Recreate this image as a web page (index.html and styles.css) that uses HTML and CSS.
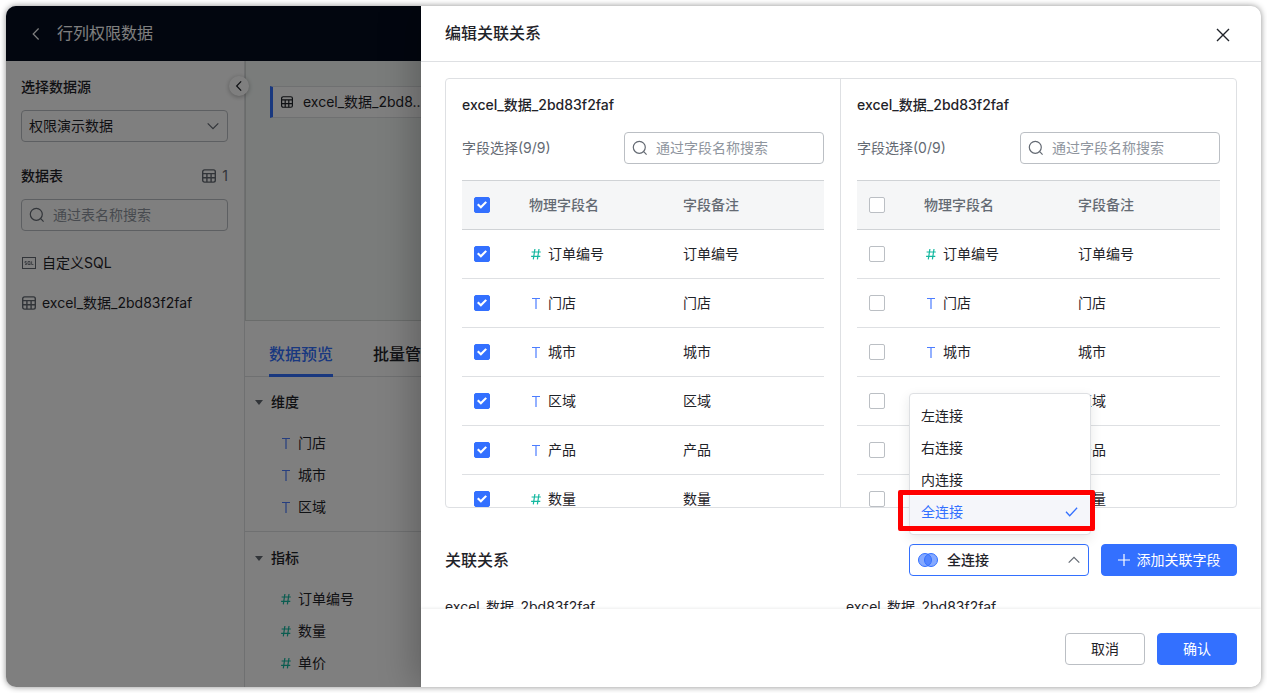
FILE: index.html
```html
<!DOCTYPE html>
<html lang="zh-CN">
<head>
<meta charset="utf-8">
<title>行列权限数据</title>
<link rel="stylesheet" href="styles.css">
</head>
<body>
<svg class="sprite" aria-hidden="true">
  <symbol id="i-search" viewBox="0 0 16 16"><circle cx="7.3" cy="7.3" r="6" /><path d="M11.7 11.7 14.6 14.6" /></symbol>
  <symbol id="i-table" viewBox="0 0 14 14"><rect x=".7" y=".9" width="12.6" height="12.2" rx="1.8" /><path d="M.7 4.6h12.6M.7 8.8h12.6M4.9 4.6V13M9.1 4.6V13" /></symbol>
  <symbol id="i-down" viewBox="0 0 12 12"><path d="M.7 3.3 6 8.7l5.3-5.4" /></symbol>
  <symbol id="i-up" viewBox="0 0 12 12"><path d="M.7 8.7 6 3.3l5.3 5.4" /></symbol>
  <symbol id="i-left" viewBox="0 0 12 12"><path d="M8.6.5 3.2 6l5.4 5.5" /></symbol>
  <symbol id="i-text" viewBox="0 0 10 12"><path d="M1 1.5h8M5 1.5V12" /></symbol>
  <symbol id="i-hash" viewBox="0 0 10 12"><path d="M3.9 1 2.3 11.4M8 1 6.4 11.4M.6 4h9.2M.1 8.3h9.2" /></symbol>
</svg>
<div class="window">
  <header class="topbar">
    <button class="back" type="button" aria-label="返回"><svg class="icon icon-back"><use href="#i-left" /></svg></button>
    <h1 class="page-title">行列权限数据</h1>
  </header>
  <div class="workspace">
    <aside class="sidebar">
      <label class="side-title" for="source">选择数据源</label>
      <div class="select-wrap source">
        <select id="source" class="select"><option>权限演示数据</option></select>
        <svg class="icon icon-caret"><use href="#i-down" /></svg>
      </div>
      <div class="side-head">
        <h2 class="side-title">数据表</h2>
        <span class="count"><svg class="icon icon-table"><use href="#i-table" /></svg>1</span>
      </div>
      <label class="search side-search"><svg class="icon icon-search"><use href="#i-search" /></svg><input type="text" placeholder="通过表名称搜索" aria-label="通过表名称搜索"></label>
      <ul class="tables">
        <li><svg class="icon-sql" viewBox="0 0 14 12"><rect x=".5" y=".5" width="13" height="11" /><path d="M4.6 4.5H3v1.5h1.6v1.5H3M6 4.5h2v3H6zM7.4 7l1 1M9.6 4.3v3.2h1.8" /></svg>自定义SQL</li>
        <li><svg class="icon icon-table"><use href="#i-table" /></svg>excel_数据_2bd83f2faf</li>
      </ul>
      <button class="collapse" type="button" aria-label="收起"><svg class="icon icon-fold"><use href="#i-left" /></svg></button>
    </aside>
    <main class="content">
      <div class="canvas">
        <div class="node"><svg class="icon icon-node"><use href="#i-table" /></svg>excel_数据_2bd8...</div>
      </div>
      <nav class="tabs">
        <button class="tab active" type="button">数据预览</button>
        <button class="tab" type="button">批量管理</button>
      </nav>
      <section class="group">
        <h3 class="group-title"><span class="triangle"></span>维度</h3>
        <ul class="fields">
          <li><svg class="icon kind text"><use href="#i-text" /></svg>门店</li>
          <li><svg class="icon kind text"><use href="#i-text" /></svg>城市</li>
          <li><svg class="icon kind text"><use href="#i-text" /></svg>区域</li>
        </ul>
      </section>
      <section class="group">
        <h3 class="group-title"><span class="triangle"></span>指标</h3>
        <ul class="fields">
          <li><svg class="icon kind number"><use href="#i-hash" /></svg>订单编号</li>
          <li><svg class="icon kind number"><use href="#i-hash" /></svg>数量</li>
          <li><svg class="icon kind number"><use href="#i-hash" /></svg>单价</li>
        </ul>
      </section>
    </main>
  </div>
  <div class="mask"></div>
  <section class="drawer" role="dialog" aria-labelledby="drawer-title">
    <header class="drawer-head">
      <h2 id="drawer-title" class="drawer-title">编辑关联关系</h2>
      <button class="close" type="button" aria-label="关闭"><svg class="icon icon-close" viewBox="0 0 14 14"><path d="M1 1l12 12M13 1 1 13" /></svg></button>
    </header>
    <div class="drawer-body">
      <div class="panes">
        <section class="pane">
          <h3 class="pane-title">excel_数据_2bd83f2faf</h3>
          <div class="pane-tools">
            <span>字段选择(9/9)</span>
            <label class="search"><svg class="icon icon-search"><use href="#i-search" /></svg><input type="text" placeholder="通过字段名称搜索" aria-label="通过字段名称搜索"></label>
          </div>
          <table class="grid">
            <thead><tr><th class="c-check"><input type="checkbox" checked aria-label="全选"></th><th class="c-name">物理字段名</th><th>字段备注</th></tr></thead>
            <tbody>
              <tr><td class="c-check"><input type="checkbox" checked aria-label="订单编号"></td><td><span class="field"><svg class="icon kind number"><use href="#i-hash" /></svg>订单编号</span></td><td>订单编号</td></tr>
              <tr><td class="c-check"><input type="checkbox" checked aria-label="门店"></td><td><span class="field"><svg class="icon kind text"><use href="#i-text" /></svg>门店</span></td><td>门店</td></tr>
              <tr><td class="c-check"><input type="checkbox" checked aria-label="城市"></td><td><span class="field"><svg class="icon kind text"><use href="#i-text" /></svg>城市</span></td><td>城市</td></tr>
              <tr><td class="c-check"><input type="checkbox" checked aria-label="区域"></td><td><span class="field"><svg class="icon kind text"><use href="#i-text" /></svg>区域</span></td><td>区域</td></tr>
              <tr><td class="c-check"><input type="checkbox" checked aria-label="产品"></td><td><span class="field"><svg class="icon kind text"><use href="#i-text" /></svg>产品</span></td><td>产品</td></tr>
              <tr><td class="c-check"><input type="checkbox" checked aria-label="数量"></td><td><span class="field"><svg class="icon kind number"><use href="#i-hash" /></svg>数量</span></td><td>数量</td></tr>
            </tbody>
          </table>
        </section>
        <section class="pane">
          <h3 class="pane-title">excel_数据_2bd83f2faf</h3>
          <div class="pane-tools">
            <span>字段选择(0/9)</span>
            <label class="search"><svg class="icon icon-search"><use href="#i-search" /></svg><input type="text" placeholder="通过字段名称搜索" aria-label="通过字段名称搜索"></label>
          </div>
          <table class="grid">
            <thead><tr><th class="c-check"><input type="checkbox" aria-label="全选"></th><th class="c-name">物理字段名</th><th>字段备注</th></tr></thead>
            <tbody>
              <tr><td class="c-check"><input type="checkbox" aria-label="订单编号"></td><td><span class="field"><svg class="icon kind number"><use href="#i-hash" /></svg>订单编号</span></td><td>订单编号</td></tr>
              <tr><td class="c-check"><input type="checkbox" aria-label="门店"></td><td><span class="field"><svg class="icon kind text"><use href="#i-text" /></svg>门店</span></td><td>门店</td></tr>
              <tr><td class="c-check"><input type="checkbox" aria-label="城市"></td><td><span class="field"><svg class="icon kind text"><use href="#i-text" /></svg>城市</span></td><td>城市</td></tr>
              <tr><td class="c-check"><input type="checkbox" aria-label="区域"></td><td><span class="field"><svg class="icon kind text"><use href="#i-text" /></svg>区域</span></td><td>区域</td></tr>
              <tr><td class="c-check"><input type="checkbox" aria-label="产品"></td><td><span class="field"><svg class="icon kind text"><use href="#i-text" /></svg>产品</span></td><td>产品</td></tr>
              <tr><td class="c-check"><input type="checkbox" aria-label="数量"></td><td><span class="field"><svg class="icon kind number"><use href="#i-hash" /></svg>数量</span></td><td>数量</td></tr>
            </tbody>
          </table>
        </section>
      </div>
      <div class="relation-head">
        <label class="relation-title" for="join">关联关系</label>
        <div class="select-wrap join">
          <svg class="icon-join" viewBox="0 0 20 14"><circle cx="7" cy="7" r="6.5" /><circle cx="13" cy="7" r="6.5" /></svg>
          <select id="join" class="select"><option>全连接</option></select>
          <svg class="icon icon-caret"><use href="#i-up" /></svg>
          <ul class="menu" role="listbox" aria-label="连接方式">
            <li role="option">左连接</li>
            <li role="option">右连接</li>
            <li role="option">内连接</li>
            <li role="option" class="selected" aria-selected="true">全连接<svg class="icon icon-check" viewBox="0 0 12 10"><path d="M.5 4.8 4.2 8.8 11.6.8" /></svg></li>
          </ul>
        </div>
        <button class="btn primary add" type="button"><svg class="icon icon-plus" viewBox="0 0 12 12"><path d="M6 0v12M0 6h12" /></svg>添加关联字段</button>
      </div>
      <div class="relation-cols"><span>excel_数据_2bd83f2faf</span><span>excel_数据_2bd83f2faf</span></div>
    </div>
    <footer class="drawer-foot">
      <button class="btn" type="button">取消</button>
      <button class="btn primary" type="button">确认</button>
    </footer>
  </section>
</div>
</body>
</html>
```
FILE: styles.css
```css
:root {
  --blue: #3370ff;
  --green: #14b8a0;
  --ink: #1f2329;
  --muted: #646a73;
  --hint: #8f959e;
  --line: #dee0e3;
  --edge: #bbbfc4;
}
* { box-sizing: border-box; }
body {
  margin: 0;
  padding: 6px;
  height: 100vh;
  background: #fff;
  color: var(--ink);
  font: 14px/20px Inter, "Noto Sans CJK SC", sans-serif;
}
h1, h2, h3, ul { margin: 0; padding: 0; list-style: none; font-size: inherit; }
button, input, select { font: inherit; color: inherit; }
button { padding: 0; border: 0; background: none; cursor: pointer; }
.sprite { display: none; }
.icon { flex: none; fill: none; stroke: currentColor; stroke-width: 1.2; }

.window {
  position: relative;
  display: flex;
  flex-direction: column;
  height: 100%;
  border-radius: 10px;
  box-shadow: 0 0 6px rgba(0, 0, 0, .45);
}
.topbar {
  display: flex;
  align-items: center;
  gap: 15px;
  height: 55px;
  flex: none;
  padding: 0 24px;
  border-radius: 10px 16px 0 0;
  background: #040c1e;
  color: #fff;
}
.back, .icon-back { display: block; width: 12px; height: 14px; }
.page-title { padding-bottom: 2px; font-size: 16px; font-weight: 400; line-height: 24px; }
.workspace { display: flex; flex: 1; min-height: 0; }

.sidebar {
  position: relative;
  flex: none;
  width: 239px;
  padding: 16px 16px 16px 15px;
  border-right: 1px solid var(--line);
}
.side-title { display: block; font-weight: 500; }
.select-wrap { position: relative; display: flex; align-items: center; }
.select {
  width: 100%;
  height: 32px;
  padding: 0 32px 0 7px;
  border: 1px solid var(--edge);
  border-radius: 4px;
  background: transparent;
  appearance: none;
}
.source { margin-top: 13px; }
.select-wrap .icon-caret { position: absolute; right: 9px; width: 12px; height: 12px; color: var(--muted); }
.side-head { display: flex; justify-content: space-between; margin-top: 24px; }
.count { display: flex; align-items: center; gap: 6px; color: var(--muted); }
.icon-table { width: 14px; height: 14px; color: var(--muted); stroke-width: 1.4; }
.search {
  display: flex;
  align-items: center;
  gap: 8px;
  height: 32px;
  padding: 0 7px;
  border: 1px solid var(--edge);
  border-radius: 4px;
}
.search input { flex: 1; min-width: 0; padding: 0; border: 0; outline: 0; background: none; }
.search input::placeholder { color: var(--hint); opacity: 1; }
.icon-search { width: 16px; height: 16px; color: var(--muted); }
.side-search { margin-top: 13px; }
.tables { margin-top: 12px; padding-left: 1px; }
.tables li { display: flex; align-items: center; gap: 6px; height: 40px; }
.icon-sql { width: 14px; height: 12px; fill: none; stroke: var(--muted); stroke-width: 1; }
.icon-sql path { stroke-width: .8; }
.collapse {
  position: absolute;
  top: 15px;
  right: -5px;
  display: grid;
  place-items: center;
  width: 20px;
  height: 20px;
  border-radius: 50%;
  background: #fff;
  box-shadow: 0 1px 5px rgba(0, 0, 0, .3);
}
.icon-fold { width: 10px; height: 10px; stroke-width: 1.5; }

.content { flex: 1; min-width: 0; overflow: hidden; border-radius: 0 0 16px 0; }
.canvas { height: 260px; padding: 25px 24px; border: 1px solid #d4d8d7; border-width: 0 0 1px 1px; background: #f4f9f7; }
.node {
  display: flex;
  align-items: center;
  gap: 10px;
  width: 168px;
  height: 32px;
  padding-left: 8px;
  border: 1px solid var(--line);
  border-left: 3px solid var(--blue);
  background: #fff;
  white-space: nowrap;
}
.icon-node { width: 12px; height: 12px; stroke-width: 1.4; }
.tabs { display: flex; gap: 40px; height: 56px; padding: 0 24px; border-bottom: 1px solid var(--line); }
.tab { height: 56px; padding-top: 12px; border-bottom: 3px solid transparent; font-size: 16px; font-weight: 500; line-height: 24px; }
.active { border-color: var(--blue); color: var(--blue); }
.group { padding: 8px 10px; border-bottom: 1px solid var(--line); }
.group:last-child { border: 0; padding-top: 9px; }
.group-title { display: flex; align-items: center; gap: 8px; height: 34px; font-weight: 500; }
.triangle { border: solid transparent; border-width: 5px 4px 0; border-top-color: var(--muted); }
.fields { padding: 8px 0 0 26px; }
.fields li { display: flex; align-items: center; gap: 7px; height: 32px; }
.kind { width: 10px; height: 12px; }
.text { color: #4c7dff; }
.number { color: var(--green); }

.mask { position: absolute; inset: 0; border-radius: 10px 16px 16px 10px; background: rgba(0, 0, 0, .5); }
.drawer {
  position: absolute;
  top: 0;
  right: 0;
  bottom: 0;
  display: flex;
  flex-direction: column;
  width: 840px;
  max-width: 100%;
  border-radius: 0 10px 10px 0;
  background: #fff;
  box-shadow: -6px 0 36px rgba(0, 0, 0, .25);
  clip-path: inset(0 0 0 -60px round 10px);
}
.drawer-head {
  display: flex;
  flex: none;
  align-items: center;
  justify-content: space-between;
  height: 56px;
  padding: 0 24px;
  border-bottom: 1px solid var(--line);
}
.drawer-title, .relation-title { font-size: 16px; font-weight: 500; line-height: 24px; }
.drawer-title { padding-bottom: 2px; }
.close { display: grid; place-items: center; width: 28px; height: 30px; padding-top: 2px; }
.icon-close { width: 14px; height: 14px; stroke-width: 1.4; }
.drawer-body { flex: 1; min-height: 0; padding: 16px 24px; overflow: hidden; }
.panes {
  display: grid;
  grid-template-columns: 1fr calc(50% + 1px);
  height: 430px;
  border: 1px solid var(--line);
  border-radius: 4px;
  overflow: hidden;
}
.pane { min-width: 0; padding: 16px; }
.pane + .pane { border-left: 1px solid var(--line); }
.pane-title { font-weight: 500; line-height: 20px; }
.pane-tools { display: flex; align-items: center; justify-content: space-between; margin: 17px 0 16px; color: var(--muted); }
.pane-tools .search { width: 200px; }
.grid { width: 100%; border-spacing: 0; table-layout: fixed; text-align: left; }
.grid th, .grid td { height: 49px; padding: 0 16px; border-bottom: 1px solid var(--line); }
.grid th { height: 50px; border-top: 1px solid #d0d3d6; border-bottom-color: #d0d3d6; background: #f5f6f7; color: var(--muted); font-weight: 500; }
.grid .c-check { width: 51px; padding: 0 12px; }
.c-name { width: 154px; }
.grid input {
  display: block;
  width: 16px;
  height: 16px;
  margin: 0;
  border: 1px solid var(--edge);
  border-radius: 2px;
  background: #fff;
  appearance: none;
}
.grid input:checked { display: grid; place-items: center; border-color: var(--blue); background: var(--blue); }
.grid input:checked::before {
  content: "";
  width: 10px;
  height: 8px;
  background: #fff;
  clip-path: polygon(0 50%, 15% 31%, 38% 60%, 84% 2%, 100% 20%, 39% 98%);
}
.field { display: flex; align-items: center; gap: 7px; padding-left: 2px; }

.relation-head { display: flex; align-items: center; gap: 12px; margin-top: 36px; }
.relation-title { flex: 1; }
.join { width: 180px; }
.join .select { padding-left: 37px; border-color: var(--blue); font-weight: 500; }
.icon-join { position: absolute; left: 9px; width: 20px; height: 14px; fill: rgba(51, 112, 255, .6); stroke: var(--blue); }
.menu {
  position: absolute;
  right: -2px;
  bottom: 41px;
  left: 0;
  padding: 6px 0;
  border: 1px solid var(--line);
  border-radius: 4px;
  background: #fff;
  box-shadow: 0 4px 12px rgba(31, 35, 41, .1);
}
.menu li { display: flex; align-items: center; justify-content: space-between; height: 32px; padding: 0 12px 0 11px; }
.menu .selected { position: relative; background: #f5f6fa; color: var(--blue); }
.selected::after { content: ""; position: absolute; inset: -6px -5px -3px -12px; border: 5px solid #f00; border-radius: 2px; }
.icon-check { width: 13px; height: 10px; stroke-width: 1.3; }
.btn { width: 80px; height: 32px; border: 1px solid var(--edge); border-radius: 4px; background: #fff; }
.primary { border-color: var(--blue); background: var(--blue); color: #fff; }
.add { display: flex; align-items: center; justify-content: center; gap: 7px; width: 136px; }
.icon-plus { width: 12px; height: 12px; }
.relation-cols { display: grid; grid-template-columns: 1fr 1fr; gap: 10px; margin-top: 21px; }
.drawer-foot {
  position: relative;
  display: flex;
  flex: none;
  justify-content: flex-end;
  gap: 12px;
  padding: 24px 24px 22px;
  border-radius: 0 0 10px 0;
  background: #fff;
  box-shadow: 0 -1px 3px rgba(31, 35, 41, .08);
}
```
